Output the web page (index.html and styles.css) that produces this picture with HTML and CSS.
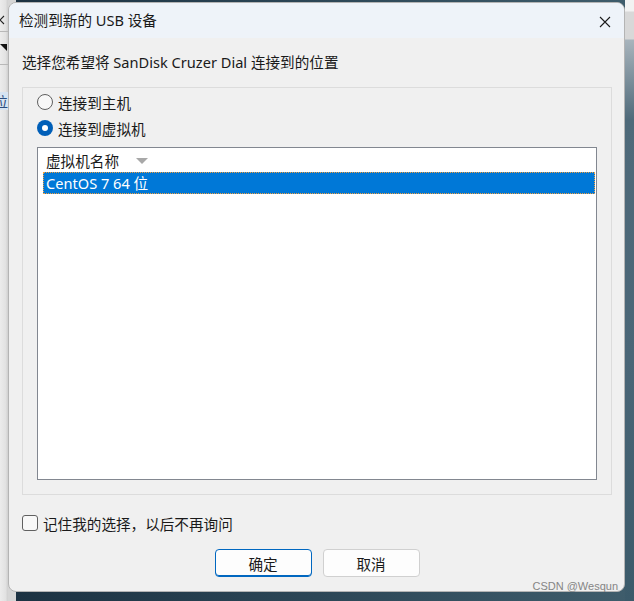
FILE: index.html
```html
<!DOCTYPE html>
<html lang="zh-CN">
<head>
<meta charset="utf-8">
<title>检测到新的 USB 设备</title>
<link rel="stylesheet" href="styles.css">
</head>
<body>
<div class="desktop">
  <div class="left-strip">
    <svg class="ls-x" width="8" height="10" viewBox="0 0 8 10"><path d="M-4 1 L4 9 M4 1 L-4 9" stroke="#222" stroke-width="1.1" fill="none"/></svg>
    <div class="ls-line"></div>
    <div class="ls-tri"></div>
    <div class="ls-line ls-line2"></div>
    <div class="ls-char">位</div>
  </div>
  <div class="window">
    <div class="titlebar">
      <span class="title">检测到新的 USB 设备</span>
      <svg class="close" width="12" height="12" viewBox="0 0 12 12"><path d="M1 1 L11 11 M11 1 L1 11" stroke="#1b1b1b" stroke-width="1.1" fill="none"/></svg>
    </div>
    <div class="body">
      <div class="prompt">选择您希望将 SanDisk Cruzer Dial 连接到的位置</div>
      <div class="group">
        <div class="radio-row"><span class="radio"></span><span>连接到主机</span></div>
        <div class="radio-row row2"><span class="radio checked"></span><span>连接到虚拟机</span></div>
        <div class="list">
          <div class="list-head"><span>虚拟机名称</span><span class="sort-tri"></span></div>
          <div class="list-row selected">CentOS 7 64 位</div>
        </div>
      </div>
      <div class="check-row"><span class="checkbox"></span><span>记住我的选择，以后不再询问</span></div>
      <div class="buttons">
        <button class="btn primary">确定</button>
        <button class="btn">取消</button>
      </div>
    </div>
  </div>
  <div class="right-strip"></div>
  <div class="watermark">CSDN @Wesqun</div>
</div>
</body>
</html>
```
FILE: styles.css
```css
* { box-sizing: border-box; }
html, body { margin: 0; padding: 0; }
body {
  width: 634px;
  height: 601px;
  overflow: hidden;
  font-family: "Noto Sans", "Noto Sans CJK SC", sans-serif;
  font-size: 14.6px;
  color: #1a1a1a;
}
.desktop {
  position: relative;
  width: 634px;
  height: 601px;
  display: grid;
  grid-template-columns: 8px 617px 9px;
  align-items: start;
  background: linear-gradient(90deg, #d6d6d6 0px, #d6d6d6 16px, #1c3242 16px, #2c4656 50%, #3f5d6c 100%);
}
.left-strip {
  height: 601px;
  background: linear-gradient(90deg, #ececec 0%, #e2e2e2 70%, #cfcfcf 100%);
  overflow: hidden;
  display: flex;
  flex-direction: column;
  position: relative;
}
.ls-x { margin-top: 15px; display: block; }
.ls-line { height: 1px; background: #b8b8b8; margin-top: 6px; }
.ls-tri {
  width: 0; height: 0;
  margin-top: 12px;
  border-left: 7px solid transparent;
  border-top: 7px solid #111;
}
.ls-line2 { margin-top: 13px; }
.ls-char {
  margin-top: 27px;
  height: 18px;
  width: 8px;
  font-family: "Noto Sans CJK SC", sans-serif;
  font-size: 14px;
  line-height: 18px;
  background: #d6e4f2;
  color: #2a4d80;
  text-indent: -6px;
  white-space: nowrap;
  overflow: hidden;
}
.window {
  margin-top: 2px;
  height: 590px;
  background: #f0f0f0;
  border: 1px solid #b4b4b4;
  border-radius: 8px;
  overflow: hidden;
  display: flex;
  flex-direction: column;
}
.titlebar {
  height: 35px;
  background: #eef3f9;
  display: flex;
  align-items: center;
  justify-content: space-between;
  padding: 0 13px 0 10px;
  flex-shrink: 0;
}
.title { line-height: 20px; margin-top: -1px; }
.close { margin-top: 2px; }
.body {
  padding: 0 12px 0 13px;
  display: flex;
  flex-direction: column;
}
.prompt { line-height: 20px; margin-top: 14px; }
.group {
  margin-top: 15px;
  height: 408px;
  border: 1px solid #dcdcdc;
  padding: 4px 14px 14px 14px;
  display: flex;
  flex-direction: column;
}
.radio-row {
  height: 20px;
  display: flex;
  align-items: center;
  gap: 5px;
}
.row2 { margin-top: 6px; }
.radio {
  width: 16px; height: 16px;
  border-radius: 50%;
  border: 1px solid #5f5f5f;
  background: #f7f7f7;
  flex-shrink: 0;
  display: flex;
  align-items: center;
  justify-content: center;
}
.radio.checked {
  border: none;
  background: #005fb8;
}
.radio.checked::after {
  content: "";
  width: 6px; height: 6px;
  border-radius: 50%;
  background: #ffffff;
}
.list {
  margin-top: 9px;
  height: 333px;
  background: #ffffff;
  border: 1px solid #828790;
  display: flex;
  flex-direction: column;
}
.list-head {
  height: 24px;
  display: flex;
  align-items: center;
  padding-left: 8px;
  gap: 17px;
}
.sort-tri {
  width: 0; height: 0;
  border-left: 6px solid transparent;
  border-right: 6px solid transparent;
  border-top: 6px solid #a8a8a8;
  margin-top: 1px;
}
.list-row {
  height: 22px;
  line-height: 20px;
  margin: 0 1px 0 5px;
  padding-left: 2px;
}
.list-row.selected {
  background: #0078d7;
  color: #ffffff;
  border: 1px dotted #f0a040;
}
.check-row {
  margin-top: 18px;
  height: 20px;
  display: flex;
  align-items: center;
  gap: 5px;
}
.checkbox {
  width: 16px; height: 16px;
  border: 1px solid #606060;
  border-radius: 3px;
  background: #f8f8f8;
  flex-shrink: 0;
}
.buttons {
  margin-top: 16px;
  display: flex;
  justify-content: center;
  gap: 11px;
}
.btn {
  width: 97px;
  height: 28px;
  font-family: "Noto Sans", "Noto Sans CJK SC", sans-serif;
  font-size: 14.6px;
  color: #1a1a1a;
  background: #fdfdfd;
  border: 1px solid #d0d0d0;
  border-radius: 4px;
  padding: 0;
}
.btn.primary {
  border: 1px solid #0067c0;
  box-shadow: inset 0 -1px 0 #0067c0;
}
.right-strip {
  height: 601px;
  background: linear-gradient(180deg, #f2f2f2 0px, #f2f2f2 11px, #d8d8d8 12px, #d8d8d8 39px, #a8b4bc 40px, #4f6a7a 120px, #4a6677 60%, #3b5a6a 100%);
}
.watermark {
  position: absolute;
  right: 16px;
  top: 579px;
  font-family: "Liberation Sans", sans-serif;
  font-size: 11px;
  line-height: 14px;
  color: #858585;
}
```
